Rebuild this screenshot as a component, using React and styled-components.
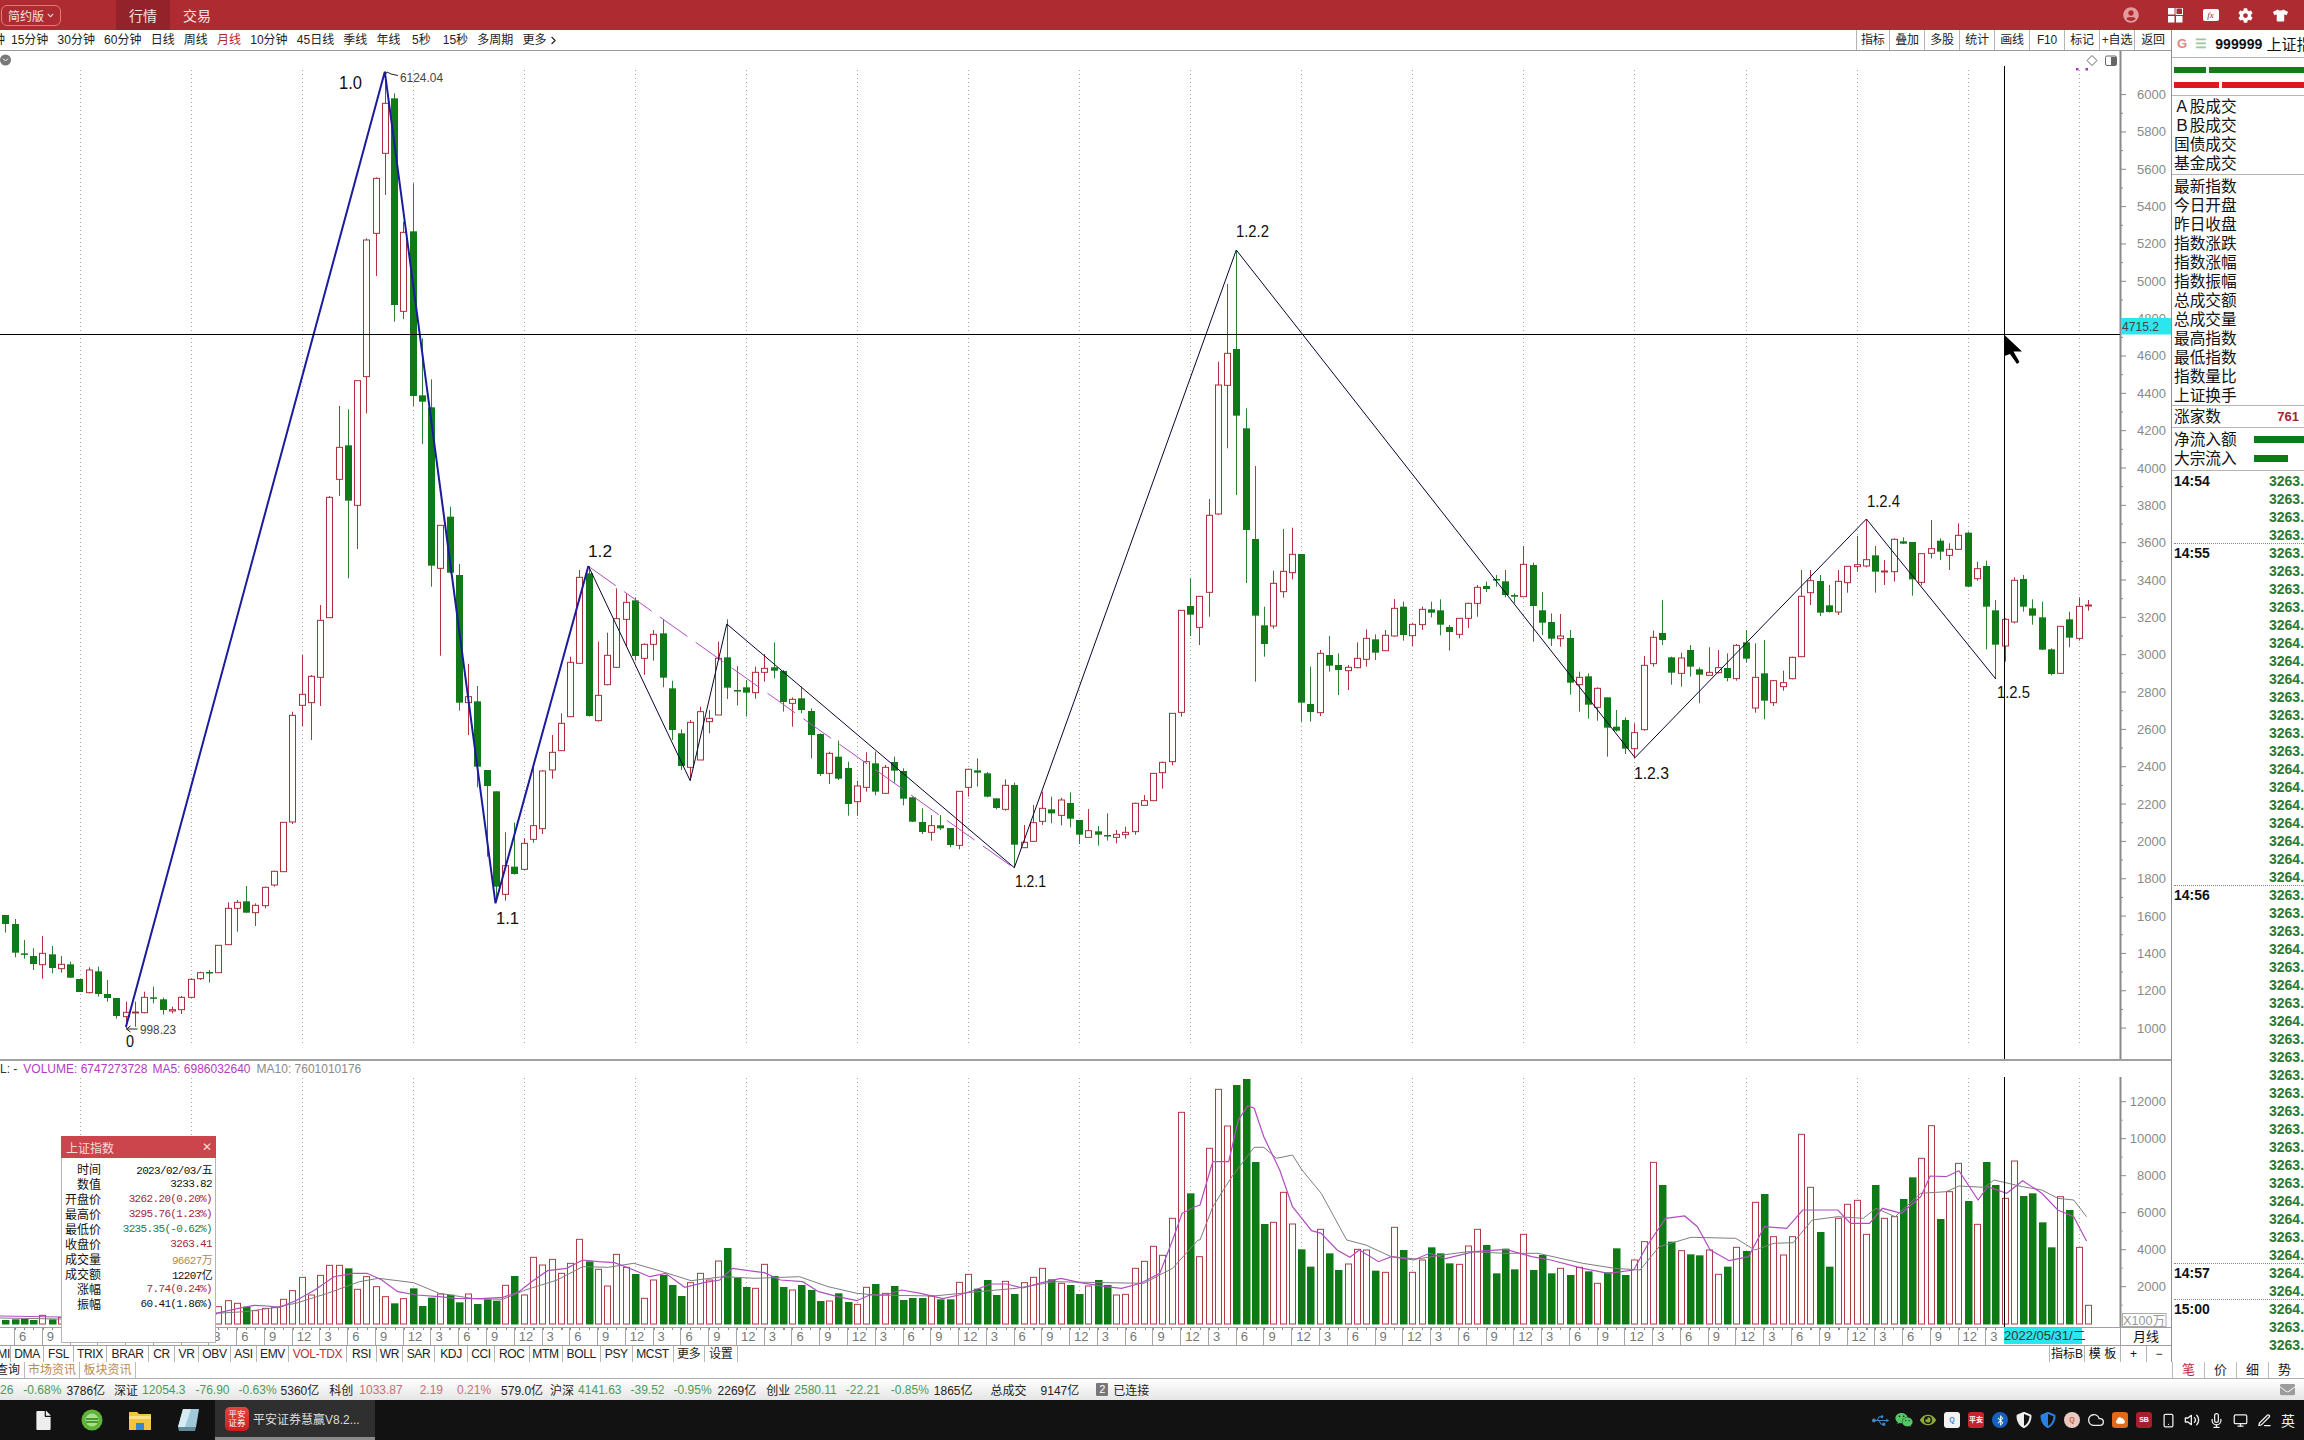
import React from 'react';
import styled, { createGlobalStyle } from 'styled-components';
import {
  FaBluetoothB, FaChevronDown, FaCloud, FaCog, FaEnvelope, FaEye, FaFile, FaShieldAlt, FaTshirt, FaUsb, FaUserCircle, FaWeixin,
} from 'react-icons/fa';
import { FiChevronRight, FiCloud, FiEdit3, FiMic, FiMonitor, FiSmartphone, FiVolume2 } from 'react-icons/fi';

const SANS = '"Liberation Sans", "Noto Sans CJK SC", sans-serif';
const CANDLE_X = (i) => 5.4 + 9.256 * i;

// candle rows: type + body top, body bottom, wick top, wick bottom (read at 3x from y0)
const parse = (y0, text) =>
  text.trim().split(/\s+/).map((row) => {
    const [a, b, c, d] = row.slice(1).split(',').map(Number);
    return { up: row[0] === 'u', top: y0 + a / 3, bot: y0 + b / 3, hi: y0 + c / 3, lo: y0 + d / 3 };
  });

const CANDLES = [
  ...parse(540, `d1125,1152,1125,1178 d1152,1238,1137,1252 d1240,1244,1200,1256 d1248,1272,1225,1290 u1240,1274,1188,1316
    d1243,1284,1218,1300 u1273,1286,1248,1298 d1273,1313,1265,1314 d1317,1356,1317,1356 u1290,1358,1282,1360
    d1294,1362,1280,1370 d1362,1374,1320,1385 d1374,1428,1374,1436 u1417,1430,1385,1465 u1416,1419,1385,1460
    u1372,1418,1355,1420 d1372,1375,1340,1390 d1378,1410,1373,1424 u1409,1413,1400,1420 u1372,1409,1368,1422
    u1318,1372,1315,1373 u1298,1316,1295,1320 d1296,1298,1290,1328 u1216,1298,1216,1298 u1105,1214,1087,1214
    u1087,1105,1080,1175 d1084,1118,1038,1118 u1096,1118,1090,1158 u1042,1097,1040,1105 u994,1035,992,1040
    u847,995,847,995 u526,846,515,852 u463,496,345,558 u409,488,405,600 u241,412,195,498`),
  ...parse(40, `u1372,1733,1368,1733 u1222,1318,1098,1368 d1216,1382,1108,1615 u1022,1396,1022,1527 u600,1010,595,1120
    u415,580,412,708 u190,340,95,465 d175,795,160,845 u577,814,545,837 d574,1068,430,1098 d1066,1085,895,1212
    d1102,1577,1018,1640 u1456,1585,1456,1847 d1430,1598,1400,1600`),
  ...parse(540, `d105,488,72,512 u470,488,372,585 d484,680,438,742 d690,738,690,950 d754,1040,754,1080 u977,1063,877,1082
    d980,1002,848,1004 u910,988,895,990 u857,898,680,908 u693,866,690,882 u637,690,585,716 u550,632,520,632
    u367,530,350,530 u112,370,90,370 d100,528,78,530 u466,542,305,545 u346,434,278,436 u236,382,145,384
    u187,238,160,320 d181,348,172,362 u313,355,310,404 u283,313,270,362 d280,413,240,442 d445,570,422,600
    d580,678,568,690 u547,682,540,715 u515,660,500,660`),
  ...parse(500, `u655,665,630,700 u475,645,425,645 d472,563,358,597 d570,572,498,616 d562,578,540,650 u517,578,500,596
    u505,517,462,545 d502,512,427,535 d513,606,510,635 u598,610,592,680 d595,630,560,640 d633,705,625,775
    d702,822,700,828 u760,820,755,852 d770,836,722,840 d804,912,785,947 u858,905,842,947 u785,862,757,875
    d790,875,755,886 u802,880,795,882 d786,812,770,848 d813,896,805,916 d892,965,890,966 d966,996,925,1002
    u977,997,945,1022 d976,985,945,990 d984,1035,984,1042 u874,1036,874,1048 u808,862,806,890 d811,818,775,860
    d820,890,816,892 d895,924,895,928 u856,928,838,932 d855,1034,848,1103 u1027,1043,975,1044 u968,1024,915,1024
    u925,964,875,975 d928,940,890,970 u900,946,893,976 d909,956,877,982 d960,1004,960,1032 u992,1012,927,1012
    d994,1004,978,1037 d1005,1007,940,1022 u1003,1012,990,1030 u997,1004,980,1016 u910,995,908,1004 u902,916,885,916
    u820,902,820,902 u787,818,785,866 u640,785,640,796 u331,637,330,650 d318,344,235,408 u289,382,289,435 u46,277,-3,350`),
  ...parse(60, `u975,1362,905,1365 u880,976,672,1165 d867,1067,570,1305 d1105,1410,1045,1569`),
  ...parse(500, `d117,347,-102,545 d376,432,320,470 u250,378,212,386 u214,275,87,293 u163,218,83,238 d162,608,162,665
    d612,636,500,665 u460,638,450,648 d465,497,408,515 d495,510,460,585 u502,512,495,570 u475,503,427,505
    u415,478,388,500 d418,458,403,480 u406,452,390,452 u325,408,297,410`),
  ...parse(480, `d380,465,365,482 u433,467,430,498 u388,434,380,450 d388,398,365,412 d391,434,358,466 d441,456,435,512
    u415,463,415,475 u370,415,368,444 u322,370,315,410 d318,327,305,336 d297,301,285,320 d304,345,270,352
    d345,350,340,370 u253,350,198,350 d255,378,248,485 d391,428,336,465 d426,476,400,498 u468,476,402,500
    d474,608,450,644 u592,614,575,695 d589,674,580,716 u625,682,622,722 d652,743,652,830 d740,752,690,755
    d720,806,712,822 u758,806,730,835 u556,749,528,752 u472,551,452,560 d459,480,360,495 d532,578,530,614
    u534,580,518,620 d510,560,495,590 d568,584,562,670 u577,586,502,587 u563,578,510,580 d564,594,520,604
    u496,596,492,602 d487,536,450,548 u592,684,490,698 d580,662,480,718 u602,668,600,678 u608,620,572,632
    u532,596,530,598 u349,530,270,530 u302,338,270,375 d303,398,285,408 d376,396,315,398 u304,396,270,405
    u259,308,258,338 u254,260,168,275 u239,258,117,262 d226,275,198,338 u273,275,240,315 u178,275,175,305
    d184,191,172,192 d186,298,186,347 u221,307,221,316 u206,220,120,235 d182,215,175,240 u208,226,190,270
    u166,208,130,210 d158,320,155,322 u266,296,245,302 d258,380,242,508 d391,494,360,596 u418,498,415,545
    u301,426,292,430 d297,380,285,395 d385,407,358,434 d412,509,365,510 d508,582,505,586 u439,580,438,582
    d418,473,395,502 u379,475,352,482 u375,378,360,392`),
];

const parseVol = (y0, text) =>
  text.trim().split(/\s+/).map((row) => ({ up: row[0] === 'u', top: y0 + Number(row.slice(1)) / 3 }));

const VOLUMES = [
  ...parseVol(1040, `d840 d838 d836 d840 u826 d838 u832 u840 u840 u840 u840 u840 u840 u840 u840 u840 u840 u840 u840 u840 u840 u840 u840
    u800 u782 u790 d800 u812 u805 u803 u778 u752 u712 u765 u706 u676 u676 d685 u748 u710 u740 u770 d790 u776 d745 d798 d773
    u762 d764 d787 u762 d792 d778 d782`),
  ...parseVol(1060, `u676 d648 u705 u592 u615 u598 u640 u610 u538 d604 u628 u678 u583 u622 d642 u715 u660 d645 d675 d708 u668 u640 u660
    u603 d564 d654 d681 u685 u613 d648 d681 u690 d675 d690 d723 u723 d700 d726 u733 u682 d672 u700 d678 d720 d714 d714 u708
    d718 d718 u667 u643 d686 d660 d705 u664 d702 u668 u652 u625 d658 u670 d675 d702 u678 d660 d675 u705 u703 u625 u604 u559
    u586 u475 u157 d400
    u590 u265 u88 u198 d75 d57 d306 d492 u487 u397 u492 d568 d620 u508 d580 d630 u612 u568 u570 d632 u637 u502 d570 u637 u600
    d562 d580 d610 u613 u558 u508 d555 d640 d566 d628 u523 d630 d585 d640 u625 d645 u622 d634 u670 d637 d565 d645 u600 u545
    u307 d375 d545 u572 d583 d586 u570 u643 d620 u562 d573 u427 d402 u530 u585 u530 u223 u382 d516 d620 u475 u433 u421 u523
    d375 u475 u470 d417 d352 u295 u197 d477 u395 u310 d423 u493 d306 d375 u415 u303 d408 d400 d487 d562 u410 d450 u562 u736`),
];

const toPts = (x0, list) => list.map(([x, y]) => `${(x0 + x / 1.568).toFixed(1)},${(1060 + y / 3).toFixed(1)}`).join(' ');

const MA5 = `0,1316 60,1317 217,1313 ` + toPts(200, [[25,760],[60,745],[85,736],[105,738],[125,742],[150,722],[180,690],[210,650],[240,640],[262,640],[285,660],[310,695],[340,705],[375,710],[400,715],[440,716],[475,712],[500,695],[520,665],[545,632],[575,625],[600,600],[625,605],[650,608],[680,630],[705,650],[730,640],[760,682],[790,668],[815,660],[835,625],[860,632],[885,638],[910,660],[945,665],[970,695],[1000,710],[1030,722],[1050,705],[1075,705],[1100,690],[1130,700],[1165,716],[1190,705],[1215,690],[1240,672],[1265,672],[1290,684],[1320,668],[1350,655],[1380,668],[1420,680],[1445,685],[1475,670],[1505,640],[1525,540],[1540,460],[1560,440]])
  + ' ' + toPts(1200, [[0,435],[20,305],[45,305],[60,180],[75,137],[85,145],[100,230],[125,330],[145,440],[175,512],[190,520],[215,570],[235,592],[250,570],[280,605],[300,590],[335,600],[360,580],[385,596],[430,575],[480,568],[520,590],[550,600],[600,625],[640,640],[680,630],[700,560],[730,475],[760,468],[780,500],[800,570],[830,602],[860,590],[885,500],[920,505],[945,450],[1000,450],[1020,490],[1050,490],[1070,445],[1100,460],[1130,410],[1145,348],[1170,350],[1190,332],[1220,420],[1235,380],[1265,400],[1290,362],[1320,400],[1345,450],[1370,470],[1390,543]]);

const MA10 = `0,1318 60,1319 217,1314 ` + toPts(200, [[25,760],[70,755],[110,745],[150,730],[200,700],[250,665],[280,655],[335,668],[375,700],[430,716],[475,718],[510,690],[560,660],[600,620],[640,622],[680,610],[720,632],[770,662],[820,650],[870,655],[940,650],[985,680],[1030,700],[1060,705],[1150,708],[1220,695],[1280,685],[1340,665],[1420,668],[1480,670],[1525,625],[1565,540]])
  + ' ' + toPts(1200, [[0,540],[20,440],[50,350],[85,262],[100,262],[120,295],[145,285],[160,330],[190,400],[230,540],[260,555],[300,590],[340,597],[380,585],[420,575],[480,580],[530,580],[600,610],[650,625],[690,630],[720,560],[770,532],[840,535],[870,570],[900,550],[930,548],[960,480],[1000,470],[1040,475],[1060,445],[1090,470],[1130,400],[1170,395],[1190,378],[1230,382],[1245,360],[1290,380],[1320,390],[1345,415],[1370,420],[1390,470]]);

const GRID_X = Array.from({ length: 19 }, (_, k) => Math.round(79.5 + 111.07 * k) + 0.5);
const WAVE_LABELS = [
  { t: '1.0', x: 339, y: 89, w: 23, big: true }, { t: '0', x: 126, y: 1047, w: 8 }, { t: '1.1', x: 496, y: 924, w: 23 },
  { t: '1.2', x: 588, y: 557, w: 24 }, { t: '1.2.1', x: 1015, y: 887, w: 31 }, { t: '1.2.2', x: 1236, y: 237, w: 33 },
  { t: '1.2.3', x: 1634, y: 779, w: 35 }, { t: '1.2.4', x: 1867, y: 507, w: 33 }, { t: '1.2.5', x: 1997, y: 698, w: 33 },
];
const PRICE_TICKS = Array.from({ length: 51 }, (_, k) => ({ y: 94.6 + 18.67 * k, value: 6000 - 100 * k }));
const VOL_TICKS = [12000, 10000, 8000, 6000, 4000, 2000].map((value, k) => ({ value, y: 1101.7 + 37 * k }));

const NAV_TABS = [
  { t: '15分钟', gap: 6 }, { t: '30分钟' }, { t: '60分钟' }, { t: '日线' }, { t: '周线' }, { t: '月线', on: true }, { t: '10分钟' },
  { t: '45日线' }, { t: '季线' }, { t: '年线' }, { t: '5秒', gap: 11.5 }, { t: '15秒', gap: 12 }, { t: '多周期' },
];
const TOOL_BTNS = ['指标', '叠加', '多股', '统计', '画线', 'F10', '标记', '+自选', '返回'];
const INDICATORS = [
  ['MI', 11], ['DMA', 33], ['FSL', 30], ['TRIX', 33], ['BRAR', 42], ['CR', 26], ['VR', 24], ['OBV', 32], ['ASI', 26], ['EMV', 32],
  ['VOL-TDX', 58], ['RSI', 30], ['WR', 26], ['SAR', 32], ['KDJ', 33], ['CCI', 27], ['ROC', 34.5], ['MTM', 33], ['BOLL', 38.5],
  ['PSY', 31.5], ['MCST', 41], ['更多', 31.5], ['设置', 32.5],
];
const STATS_FIRST = ['Ａ股成交', 'Ｂ股成交', '国债成交', '基金成交'];
const STATS_SECOND = ['最新指数', '今日开盘', '昨日收盘', '指数涨跌', '指数涨幅', '指数振幅', '总成交额', '总成交量', '最高指数', '最低指数', '指数量比', '上证换手'];
const TIME_MARKS = { 0: '14:54', 4: '14:55', 23: '14:56', 44: '14:57', 46: '15:00' };
const TICK_DIGITS = '33333333' + '4444' + '3333' + '4444444' + '333' + '43434' + '333333333' + '44' + '3' + '4444' + '33';
const POPUP_ROWS = [
  ['时间', '2023/02/03/五', '#111'], ['数值', '3233.82', '#111'], ['开盘价', '3262.20(0.20%)', '#a6273a'], ['最高价', '3295.76(1.23%)', '#a6273a'],
  ['最低价', '3235.35(-0.62%)', '#2a7a3a'], ['收盘价', '3263.41', '#a6273a'], ['成交量', '96627万', '#b08a5a'], ['成交额', '12207亿', '#111'],
  ['涨幅', '7.74(0.24%)', '#a6273a'], ['振幅', '60.41(1.86%)', '#111'],
];
const G = '#4b9a5c';
const R = '#cf6a72';
const K = '#222';
const STATUS = [
  ['26', G, 0], ['-0.68%', G, 10], ['3786亿', K, 5], ['深证', K, 9], ['12054.3', G, 4], ['-76.90', G, 10], ['-0.63%', G, 9], ['5360亿', K, 4],
  ['科创', K, 10], ['1033.87', R, 6], ['2.19', R, 17], ['0.21%', R, 14], ['579.0亿', K, 10], ['沪深', K, 7], ['4141.63', G, 4], ['-39.52', G, 9],
  ['-0.95%', G, 9], ['2269亿', K, 6], ['创业', K, 10], ['2580.11', G, 4], ['-22.21', G, 9], ['-0.85%', G, 11], ['1865亿', K, 5],
  ['总成交', K, 18], ['9147亿', K, 14],
];

const GlobalStyle = createGlobalStyle`
  html, body { margin: 0; padding: 0; background: #fff; overflow: hidden; }
  body { font-family: ${SANS}; }
`;

const Screen = styled.div`
  width: 2304px;
  height: 1440px;
  display: flex;
  flex-direction: column;
  overflow: hidden;
  color: #111;
`;

const TitleBar = styled.header`
  flex: 0 0 30px;
  display: flex;
  align-items: center;
  background: #ae2b32;
  color: #f2e4e4;
  padding-right: 6px;
`;

const VersionBtn = styled.div`
  width: 60px;
  height: 21px;
  margin-left: 1px;
  border: 1px solid #e47a7e;
  border-radius: 6px;
  display: flex;
  align-items: center;
  justify-content: center;
  gap: 3px;
  font-size: 12px;
  box-sizing: border-box;
`;

const MainTab = styled.div`
  height: 30px;
  width: 54px;
  margin-left: ${(p) => p.$gap}px;
  display: flex;
  align-items: center;
  justify-content: center;
  font-size: 14px;
  background: ${(p) => (p.$on ? '#94222a' : 'transparent')};
`;

const TitleIcons = styled.div`
  margin-left: auto;
  display: flex;
  align-items: center;
`;

const IconSlot = styled.span`
  width: 35px;
  display: flex;
  justify-content: center;
  color: ${(p) => p.$color || '#fff'};
  margin-right: ${(p) => p.$after || 0}px;
`;

const FxBadge = styled.span`
  width: 16px;
  height: 12px;
  background: #fff;
  border-radius: 2px;
  color: #8a2a30;
  font: italic 9px/12px "Liberation Serif", serif;
  text-align: center;
`;

const ToolBar = styled.div`
  flex: 0 0 21px;
  display: flex;
  align-items: stretch;
  border-bottom: 1px solid #9a9a9a;
  box-sizing: border-box;
  overflow: hidden;
  font-size: 12px;
`;

const NavTab = styled.span`
  margin-left: ${(p) => (p.$gap === undefined ? 9.2 : p.$gap)}px;
  line-height: 20px;
  white-space: nowrap;
  color: ${(p) => (p.$on ? '#b0262e' : '#222')};
  display: flex;
  align-items: center;
`;

const ToolBtns = styled.div`
  margin-left: auto;
  display: flex;
`;

const ToolBtn = styled.span`
  flex: 0 0 35px;
  border-left: 1px solid #b5b5b5;
  box-sizing: border-box;
  text-align: center;
  line-height: 20px;
  color: #222;
  white-space: nowrap;
  letter-spacing: -0.2px;
  &:first-child { flex-basis: 33.5px; }
  &:last-child { flex-basis: 37px; }
`;

const Body = styled.div`
  flex: 0 0 1332px;
  display: flex;
  overflow: hidden;
`;

const LeftPane = styled.div`
  flex: 0 0 2171px;
  position: relative;
  display: flex;
  flex-direction: column;
`;

const ChartSvg = styled.svg`
  display: block;
  flex: none;
  background: #fff;
`;

const WaveLabel = styled.text`
  font-family: "Liberation Sans", sans-serif;
  font-size: ${(p) => (p.$big ? 19 : 17)}px;
  fill: #111;
`;

const PriceText = styled.text`
  font-family: "Liberation Sans", sans-serif;
  font-size: 13px;
  fill: #444;
`;

const AxisText = styled.text`
  font-family: "Liberation Sans", sans-serif;
  font-size: 13px;
  fill: #8a8a8a;
`;

const CrossText = styled.text`
  font-family: "Liberation Sans", sans-serif;
  font-size: 13px;
  fill: #444;
`;

const UnitText = styled.text`
  font-family: "Liberation Sans", "Noto Sans CJK SC", sans-serif;
  font-size: 13px;
  fill: #999;
`;

const VolumePane = styled.div`
  flex: 0 0 268px;
  border-top: 2px solid #a0a0a0;
  display: flex;
  flex-direction: column;
  box-sizing: border-box;
`;

const VolumeLegend = styled.div`
  flex: 0 0 16px;
  display: flex;
  align-items: center;
  font-size: 12px;
  white-space: nowrap;
  background: #fff;
`;

const LegendItem = styled.span`
  margin-left: ${(p) => p.$gap}px;
  color: ${(p) => p.$color};
`;

const TimeRow = styled.div`
  flex: 0 0 17px;
  position: relative;
  display: flex;
  border-top: 1px solid #a0a0a0;
  box-sizing: border-box;
`;

const TimeTrack = styled.div`
  flex: 0 0 2120px;
  display: flex;
  padding-left: 14px;
  box-sizing: border-box;
  overflow: hidden;
`;

const TimeCell = styled.span`
  flex: 0 0 27.77px;
  box-sizing: border-box;
  border-left: 1px solid #a5a5a5;
  padding-left: 4px;
  font-size: 13px;
  line-height: 17px;
  color: #777;
  background: repeating-linear-gradient(90deg, #888 0 1px, transparent 1px 9.25px) 0 0 / 100% 2px no-repeat;
`;

const CrossDate = styled.span`
  position: absolute;
  left: 2004px;
  top: 0;
  width: 78px;
  height: 16px;
  background: #2ae6ee;
  color: #333;
  font-size: 13px;
  line-height: 16px;
  text-align: center;
  white-space: nowrap;
`;

const PeriodCell = styled.span`
  flex: 1;
  border-left: 1px solid #a0a0a0;
  text-align: center;
  font-size: 13px;
  line-height: 17px;
`;

const IndicatorRow = styled.div`
  flex: 0 0 18px;
  display: flex;
  border-top: 1px solid #a0a0a0;
  box-sizing: border-box;
  font-size: 12px;
`;

const IndicatorTab = styled.span`
  flex: 0 0 ${(p) => p.$w}px;
  box-sizing: border-box;
  border-right: 1px solid #b5b5b5;
  text-align: center;
  line-height: 17px;
  letter-spacing: -0.35px;
  white-space: nowrap;
  overflow: hidden;
  direction: ${(p) => (p.$clip ? 'rtl' : 'ltr')};
  color: ${(p) => (p.$on ? '#b4303a' : '#222')};
`;

const RowTools = styled.div`
  margin-left: auto;
  display: flex;
`;

const RowTool = styled.span`
  flex: 0 0 ${(p) => p.$w}px;
  border-left: 1px solid #b5b5b5;
  box-sizing: border-box;
  text-align: center;
  line-height: 17px;
  white-space: nowrap;
  overflow: hidden;
`;

const Popup = styled.div`
  position: absolute;
  left: 61px;
  top: 1106px;
  width: 155px;
  height: 207px;
  background: #fff;
  border: 1px solid #b5b5b5;
  border-top: 0;
  box-sizing: border-box;
`;

const PopupHead = styled.div`
  height: 22px;
  margin: 0 -1px;
  padding: 0 4px 0 5px;
  background: #cc444c;
  color: #f4dcdc;
  font-size: 12px;
  display: flex;
  align-items: center;
  justify-content: space-between;
`;

const PopupBody = styled.div`
  padding-top: 3px;
`;

const PopupRow = styled.div`
  display: flex;
  height: 15px;
  align-items: center;
  justify-content: space-between;
  padding-right: 3px;
`;

const PopupLabel = styled.span`
  width: 39px;
  text-align: right;
  font-size: 12px;
  color: #111;
`;

const PopupValue = styled.span`
  font-family: "Liberation Mono", "Noto Sans CJK SC", monospace;
  font-size: 11px;
  letter-spacing: -0.65px;
  color: ${(p) => p.$color};
  white-space: nowrap;
`;

const RightPane = styled.aside`
  flex: 1;
  border-left: 1px solid #8f8f8f;
  overflow: hidden;
  white-space: nowrap;
`;

const QuoteHead = styled.div`
  height: 28px;
  box-sizing: border-box;
  display: flex;
  align-items: center;
  gap: 8px;
  padding-left: 5px;
  border-bottom: 1px solid #b5b5b5;
`;

const QuoteMark = styled.span`
  color: ${(p) => p.$color};
  font-size: 13px;
  font-weight: 700;
`;

const QuoteCode = styled.span`
  font-weight: 700;
  font-size: 14px;
  letter-spacing: 0.1px;
`;

const QuoteName = styled.span`
  font-size: 15px;
  margin-left: -4px;
`;

const RatioBlock = styled.div`
  height: 38px;
  padding: 9px 0 0 2px;
  box-sizing: border-box;
  display: flex;
  flex-direction: column;
  gap: 9px;
  border-bottom: 1px solid #b5b5b5;
`;

const RatioBar = styled.div`
  height: 6px;
  flex: none;
  display: flex;
  gap: 3px;
`;

const RatioPart = styled.span`
  flex: 0 0 ${(p) => p.$w}px;
  background: ${(p) => p.$color};
`;

const StatGroup = styled.div`
  height: ${(p) => p.$h}px;
  box-sizing: border-box;
  padding: ${(p) => p.$top}px 0 0 2px;
  border-bottom: 1px solid #b5b5b5;
`;

const StatLine = styled.div`
  height: 19px;
  line-height: 19px;
  font-size: 15.7px;
  display: flex;
  align-items: center;
  justify-content: space-between;
`;

const RiseCount = styled.b`
  color: #a6272f;
  font-size: 13px;
  margin-right: 5px;
`;

const FlowBar = styled.span`
  flex: 0 0 ${(p) => p.$w}px;
  height: 7px;
  background: #0e7b16;
  margin-right: ${(p) => 50 - p.$w}px;
`;

const TickList = styled.div`
  padding-left: 2px;
`;

const TickRow = styled.div`
  height: 18px;
  display: flex;
  align-items: center;
  box-sizing: border-box;
  border-top: 1px ${(p) => (p.$dotted ? 'dotted #888' : 'solid transparent')};
`;

const TickTime = styled.b`
  flex: 0 0 95px;
  font-size: 14px;
  color: #111;
`;

const TickValue = styled.b`
  font-size: 14px;
  color: #2a7a32;
`;

const InfoRow = styled.div`
  flex: 0 0 17px;
  display: flex;
  border-bottom: 1px solid #b0b0b0;
  box-sizing: border-box;
  font-size: 12px;
  line-height: 16px;
`;

const InfoTab = styled.span`
  width: ${(p) => p.$w}px;
  box-sizing: border-box;
  border-right: 1px solid #bbb;
  text-align: center;
  color: ${(p) => p.$color};
  white-space: nowrap;
  overflow: hidden;
  direction: ${(p) => (p.$clip ? 'rtl' : 'ltr')};
  padding-right: ${(p) => (p.$clip ? 4 : 0)}px;
`;

const SideTabs = styled.div`
  margin-left: auto;
  display: flex;
  width: 132px;
  font-size: 13px;
`;

const SideTab = styled.span`
  flex: 0 0 32px;
  box-sizing: border-box;
  border-left: 1px solid #bbb;
  text-align: center;
  color: ${(p) => (p.$on ? '#c0262e' : '#222')};
`;

const StatusBar = styled.div`
  flex: 0 0 21px;
  display: flex;
  align-items: center;
  font-size: 12px;
  background: linear-gradient(#fff, #e5e5e5);
  padding-right: 9px;
  white-space: nowrap;
`;

const StatusItem = styled.span`
  margin-left: ${(p) => p.$gap}px;
  color: ${(p) => p.$color};
`;

const ConnBadge = styled.span`
  width: 12px;
  height: 13px;
  margin-left: 17px;
  background: #777;
  color: #fff;
  font-size: 11px;
  line-height: 13px;
  text-align: center;
  border-radius: 1px;
`;

const MailBtn = styled.span`
  margin-left: auto;
  display: flex;
  color: #9c9c9c;
`;

const TaskBar = styled.footer`
  flex: 1;
  display: flex;
  align-items: stretch;
  background: #121212;
  padding-left: 19px;
`;

const TaskSlot = styled.span`
  flex: 0 0 48.5px;
  display: flex;
  align-items: center;
  justify-content: center;
  color: #eee;
`;

const ActiveApp = styled.div`
  flex: 0 0 160px;
  margin-left: 2px;
  display: flex;
  align-items: center;
  gap: 4px;
  padding-left: 10px;
  box-sizing: border-box;
  background: #2f2f2f;
  border-bottom: 3px solid #8a8a8a;
  color: #ddd;
  font-size: 12px;
  white-space: nowrap;
`;

const AppLogo = styled.span`
  flex: 0 0 24px;
  height: 24px;
  border-radius: 5px;
  background: linear-gradient(#e8433f, #c9201f);
  color: #fff;
  font-size: 8.5px;
  line-height: 9px;
  display: flex;
  flex-direction: column;
  align-items: center;
  justify-content: center;
`;

const Tray = styled.div`
  margin-left: auto;
  margin-right: 4px;
  display: flex;
  align-items: center;
`;

const TrayIcon = styled.span`
  flex: 0 0 24px;
  display: flex;
  align-items: center;
  justify-content: center;
  color: ${(p) => p.$color || '#eee'};
`;

const TrayBadge = styled.span`
  width: ${(p) => p.$size || 16}px;
  height: ${(p) => p.$size || 16}px;
  border-radius: ${(p) => p.$radius || 3}px;
  background: ${(p) => p.$bg};
  color: ${(p) => p.$fg || '#fff'};
  font-size: 7px;
  line-height: 8px;
  font-weight: 700;
  display: flex;
  align-items: center;
  justify-content: center;
  text-align: center;
`;

const TrayWord = styled.span`
  font-size: 14px;
  color: #eee;
`;

const Candle = ({ c, i }) => {
  const x = Math.round(CANDLE_X(i));
  const color = c.up ? '#ab2e3a' : '#0f7a17';
  return (
    <g>
      <line x1={x + 0.5} x2={x + 0.5} y1={c.hi} y2={c.lo} stroke={c.up ? '#b3323d' : '#2f8036'} strokeWidth="1" />
      {c.up ? (
        <rect x={x - 2.5} y={c.top} width="6" height={Math.max(c.bot - c.top, 1)} fill="#fff" stroke={color} strokeWidth="1" />
      ) : (
        <rect x={x - 3} y={c.top} width="7" height={Math.max(c.bot - c.top, 1.5)} fill={color} />
      )}
    </g>
  );
};

const MainChart = () => (
  <ChartSvg width="2171" height="1008" viewBox="0 51 2171 1008">
    {GRID_X.map((x) => (
      <line key={x} x1={x} x2={x} y1="70" y2="1046" stroke="#a8a8a8" strokeDasharray="1 3" />
    ))}
    {CANDLES.map((c, i) => <Candle key={i} c={c} i={i} />)}
    <polyline points="588,566 1014,868" fill="none" stroke="#b04fc0" strokeDasharray="34 10" />
    <polyline points="588.4,566 690.2,780.7 726.8,624 1014.3,867.7 1236.3,250 1635,757.7 1866.4,519 1995.8,679" fill="none" stroke="#050530" strokeWidth="1" />
    <polyline points="125.9,1027 384.8,71.7 495.5,903.3 588.4,566" fill="none" stroke="#1b1b9e" strokeWidth="2" />
    <path d="M387 72l-2 3M387 72l4 2 7 1.5M126.5 1029l4-3M126.5 1029l4 3M126.5 1029h11" fill="none" stroke="#222" />
    {WAVE_LABELS.map((l) => (
      <WaveLabel key={l.t} x={l.x} y={l.y} $big={l.big} textLength={l.w} lengthAdjust="spacingAndGlyphs">{l.t}</WaveLabel>
    ))}
    <PriceText x="400" y="82" textLength="43" lengthAdjust="spacingAndGlyphs">6124.04</PriceText>
    <PriceText x="140" y="1034" textLength="36" lengthAdjust="spacingAndGlyphs">998.23</PriceText>
    <circle cx="5.5" cy="60" r="5.5" fill="#777" />
    <path d="M3 58.5l2.5 2.5 2.5-2.5" fill="none" stroke="#fff" />
    <path d="M2092 55.5l5 5-5 5-5-5z" fill="none" stroke="#666" />
    <rect x="2105.5" y="56" width="11" height="9.5" rx="1.5" fill="#fff" stroke="#666" />
    <rect x="2111" y="57" width="5" height="8" fill="#666" />
    <rect x="2076" y="68" width="2.5" height="2.5" fill="#a03ab8" />
    <rect x="2085.5" y="68" width="2.5" height="2.5" fill="#a03ab8" />
    <line x1="2120.5" x2="2120.5" y1="51" y2="1059" stroke="#8a8a8a" strokeWidth="2" />
    {PRICE_TICKS.map(({ y, value }) => (
      <line key={value} x1="2121" x2={value % 200 === 0 ? 2126 : 2123} y1={y} y2={y} stroke="#888" />
    ))}
    {PRICE_TICKS.filter((t) => t.value % 200 === 0).map(({ y, value }) => (
      <AxisText key={value} x="2166" y={y + 4.5} textAnchor="end">{value}</AxisText>
    ))}
    <rect x="2121" y="318" width="50" height="16.5" fill="#2ae6ee" />
    <CrossText x="2122" y="331" textLength="37" lengthAdjust="spacingAndGlyphs">4715.2</CrossText>
    <line x1="0" x2="2120" y1="334.5" y2="334.5" stroke="#000" strokeWidth="1" />
    <line x1="2004.5" x2="2004.5" y1="66" y2="1059" stroke="#000" strokeWidth="1" />
    <path d="M2004.5 335v21l5.5-2 7 10 2.5-2-6-10.500h8.500z" fill="#000" />
  </ChartSvg>
);

const VolumeChart = () => (
  <ChartSvg width="2171" height="250" viewBox="0 1077 2171 250">
    {GRID_X.map((x) => (
      <line key={x} x1={x} x2={x} y1="1078" y2="1324" stroke="#a8a8a8" strokeDasharray="1 3" />
    ))}
    {VOLUMES.map((v, i) => {
      const x = Math.round(CANDLE_X(i));
      return v.up ? (
        <rect key={i} x={x - 2.5} y={v.top} width="6" height={1324 - v.top} fill="#fff" stroke="#b23a46" />
      ) : (
        <rect key={i} x={x - 3} y={v.top} width="7.5" height={1324.5 - v.top} fill="#0e7a15" />
      );
    })}
    <polyline points={MA10} fill="none" stroke="#7e7e7e" strokeWidth="1" />
    <polyline points={MA5} fill="none" stroke="#b04ec0" strokeWidth="1.2" />
    <line x1="2004.5" x2="2004.5" y1="1077" y2="1327" stroke="#000" strokeWidth="1" />
    <line x1="2120.5" x2="2120.5" y1="1077" y2="1327" stroke="#8a8a8a" strokeWidth="2" />
    {VOL_TICKS.map(({ y, value }) => (
      <g key={value}>
        <line x1="2121" x2="2126" y1={y} y2={y} stroke="#888" />
        <line x1="2121" x2="2123" y1={y + 18.5} y2={y + 18.5} stroke="#aaa" />
        <AxisText x="2166" y={y + 4.5} textAnchor="end">{value}</AxisText>
      </g>
    ))}
    <rect x="2122.5" y="1313.5" width="43.5" height="13" fill="#fff" stroke="#aaa" />
    <UnitText x="2123" y="1325" textLength="42" lengthAdjust="spacingAndGlyphs">X100万</UnitText>
  </ChartSvg>
);

const GridGlyph = () => (
  <svg width="15" height="15" viewBox="0 0 15 15" fill="#fff">
    <rect x="0" y="0" width="6.500" height="6.500" />
    <rect x="8" y="0" width="6.500" height="6.500" fill="none" stroke="#fff" />
    <rect x="0" y="8" width="6.500" height="6.500" />
    <rect x="8" y="8" width="6.500" height="6.500" />
  </svg>
);

const OrbGlyph = () => (
  <svg width="22" height="22" viewBox="0 0 22 22">
    <circle cx="11" cy="11" r="10.500" fill="#5fb53a" />
    <circle cx="11" cy="11" r="6.500" fill="#a8e08a" />
    <path d="M5 10h12M5 13h12" stroke="#2e7f1e" strokeWidth="1.500" />
  </svg>
);

const FolderGlyph = () => (
  <svg width="22" height="20" viewBox="0 0 22 20">
    <path d="M0 2h8l2 2h12v16H0z" fill="#f3c53c" />
    <rect x="0" y="6" width="22" height="3" fill="#fbe08a" />
    <rect x="7" y="13" width="8" height="7" fill="#3a86c8" />
  </svg>
);

const BookGlyph = () => (
  <svg width="22" height="24" viewBox="0 0 22 24">
    <path d="M5 1h16l-3 18H0z" fill="#9fc9d8" />
    <path d="M0 19h18l-1 4H1z" fill="#5f8b9c" />
    <path d="M5 1h8L7 19H0z" fill="#d4ebf2" />
  </svg>
);

const App = () => (
  <>
    <GlobalStyle />
    <Screen>
      <TitleBar>
        <VersionBtn>简约版<FaChevronDown size={7} /></VersionBtn>
        <MainTab $gap={55} $on>行情</MainTab>
        <MainTab $gap={0}>交易</MainTab>
        <TitleIcons>
          <IconSlot $color="#e59a9c" $after={10}><FaUserCircle size={16} /></IconSlot>
          <IconSlot><GridGlyph /></IconSlot>
          <IconSlot><FxBadge>fx</FxBadge></IconSlot>
          <IconSlot><FaCog size={15} /></IconSlot>
          <IconSlot><FaTshirt size={15} /></IconSlot>
        </TitleIcons>
      </TitleBar>

      <Body>
        <LeftPane>
          <ToolBar>
            <NavTab $gap={-7}>钟</NavTab>
            {NAV_TABS.map((t) => (
              <NavTab key={t.t} $gap={t.gap} $on={t.on}>{t.t}</NavTab>
            ))}
            <NavTab>更多<FiChevronRight size={13} /></NavTab>
            <ToolBtns>
              {TOOL_BTNS.map((b) => <ToolBtn key={b}>{b}</ToolBtn>)}
            </ToolBtns>
          </ToolBar>
          <MainChart />
          <VolumePane>
            <VolumeLegend>
              <LegendItem $gap={0} $color="#333">L: -</LegendItem>
              <LegendItem $gap={6} $color="#b23cc0">VOLUME: 6747273728</LegendItem>
              <LegendItem $gap={5} $color="#b23cc0">MA5: 6986032640</LegendItem>
              <LegendItem $gap={6} $color="#8a8a8a">MA10: 7601010176</LegendItem>
            </VolumeLegend>
            <VolumeChart />
          </VolumePane>
          <TimeRow>
            <TimeTrack>
              {Array.from({ length: 72 }, (_, k) => (
                <TimeCell key={k}>{['6', '9', '12', '3'][k % 4]}</TimeCell>
              ))}
            </TimeTrack>
            <CrossDate>2022/05/31/二</CrossDate>
            <PeriodCell>月线</PeriodCell>
          </TimeRow>
          <IndicatorRow>
            {INDICATORS.map(([name, w], i) => (
              <IndicatorTab key={name} $w={w} $clip={i === 0} $on={name === 'VOL-TDX'}>{name}</IndicatorTab>
            ))}
            <RowTools>
              <RowTool $w={35}>指标B</RowTool>
              <RowTool $w={36}>模 板</RowTool>
              <RowTool $w={26}>+</RowTool>
              <RowTool $w={25}>−</RowTool>
            </RowTools>
          </IndicatorRow>
          <Popup>
            <PopupHead>上证指数<span>✕</span></PopupHead>
            <PopupBody>
              {POPUP_ROWS.map(([label, value, color]) => (
                <PopupRow key={label}>
                  <PopupLabel>{label}</PopupLabel>
                  <PopupValue $color={color}>{value}</PopupValue>
                </PopupRow>
              ))}
            </PopupBody>
          </Popup>
        </LeftPane>

        <RightPane>
          <QuoteHead>
            <QuoteMark $color="#d88a8a">G</QuoteMark>
            <QuoteMark $color="#9fc9a0">☰</QuoteMark>
            <QuoteCode>999999</QuoteCode>
            <QuoteName>上证指数</QuoteName>
          </QuoteHead>
          <RatioBlock>
            <RatioBar>
              <RatioPart $w={32} $color="#137c1a" />
              <RatioPart $w={100} $color="#137c1a" />
            </RatioBar>
            <RatioBar>
              <RatioPart $w={45} $color="#e0191c" />
              <RatioPart $w={90} $color="#e0191c" />
            </RatioBar>
          </RatioBlock>
          <StatGroup $h={79} $top={1}>
            {STATS_FIRST.map((s) => <StatLine key={s}>{s}</StatLine>)}
          </StatGroup>
          <StatGroup $h={231} $top={2}>
            {STATS_SECOND.map((s) => <StatLine key={s}>{s}</StatLine>)}
          </StatGroup>
          <StatGroup $h={22} $top={1}>
            <StatLine>涨家数<RiseCount>761</RiseCount></StatLine>
          </StatGroup>
          <StatGroup $h={43} $top={2}>
            <StatLine>净流入额<FlowBar $w={50} /></StatLine>
            <StatLine>大宗流入<FlowBar $w={34} /></StatLine>
          </StatGroup>
          <TickList>
            {TICK_DIGITS.split('').map((d, i) => (
              <TickRow key={i} $dotted={TIME_MARKS[i] && i > 0}>
                <TickTime>{TIME_MARKS[i]}</TickTime>
                <TickValue>326{d}.</TickValue>
              </TickRow>
            ))}
          </TickList>
        </RightPane>
      </Body>

      <InfoRow>
        <InfoTab $w={25} $clip $color="#222">查询</InfoTab>
        <InfoTab $w={55} $color="#bb8a55">市场资讯</InfoTab>
        <InfoTab $w={56} $color="#bb8a55">板块资讯</InfoTab>
        <SideTabs>
          <SideTab $on>笔</SideTab>
          <SideTab>价</SideTab>
          <SideTab>细</SideTab>
          <SideTab>势</SideTab>
        </SideTabs>
      </InfoRow>

      <StatusBar>
        {STATUS.map(([text, color, gap], i) => (
          <StatusItem key={i} $color={color} $gap={gap}>{text}</StatusItem>
        ))}
        <ConnBadge>2</ConnBadge>
        <StatusItem $color="#222" $gap={5}>已连接</StatusItem>
        <MailBtn><FaEnvelope size={15} /></MailBtn>
      </StatusBar>

      <TaskBar>
        <TaskSlot><FaFile size={19} /></TaskSlot>
        <TaskSlot><OrbGlyph /></TaskSlot>
        <TaskSlot><FolderGlyph /></TaskSlot>
        <TaskSlot><BookGlyph /></TaskSlot>
        <ActiveApp>
          <AppLogo><span>平安</span><span>证券</span></AppLogo>
          平安证券慧赢V8.2...
        </ActiveApp>
        <Tray>
          <TrayIcon $color="#3b8ad0"><FaUsb size={17} /></TrayIcon>
          <TrayIcon $color="#56c766"><FaWeixin size={18} /></TrayIcon>
          <TrayIcon $color="#8aa83c"><FaEye size={16} /></TrayIcon>
          <TrayIcon><TrayBadge $bg="#f2f2f2" $fg="#2e86d8">Q</TrayBadge></TrayIcon>
          <TrayIcon><TrayBadge $bg="#c8242c">平安</TrayBadge></TrayIcon>
          <TrayIcon><TrayBadge $bg="#1560c0" $radius={8}><FaBluetoothB size={11} /></TrayBadge></TrayIcon>
          <TrayIcon><FaShieldAlt size={16} /></TrayIcon>
          <TrayIcon $color="#2a80e0"><FaShieldAlt size={16} /></TrayIcon>
          <TrayIcon><TrayBadge $bg="#e8c8c0" $fg="#c05a40" $radius={8}>Q</TrayBadge></TrayIcon>
          <TrayIcon><FiCloud size={16} /></TrayIcon>
          <TrayIcon><TrayBadge $bg="#e0691a"><FaCloud size={9} /></TrayBadge></TrayIcon>
          <TrayIcon><TrayBadge $bg="#a61f2c">SB</TrayBadge></TrayIcon>
          <TrayIcon><FiSmartphone size={15} /></TrayIcon>
          <TrayIcon><FiVolume2 size={16} /></TrayIcon>
          <TrayIcon><FiMic size={15} /></TrayIcon>
          <TrayIcon><FiMonitor size={15} /></TrayIcon>
          <TrayIcon><FiEdit3 size={15} /></TrayIcon>
          <TrayIcon><TrayWord>英</TrayWord></TrayIcon>
        </Tray>
      </TaskBar>
    </Screen>
  </>
);

export default App;
